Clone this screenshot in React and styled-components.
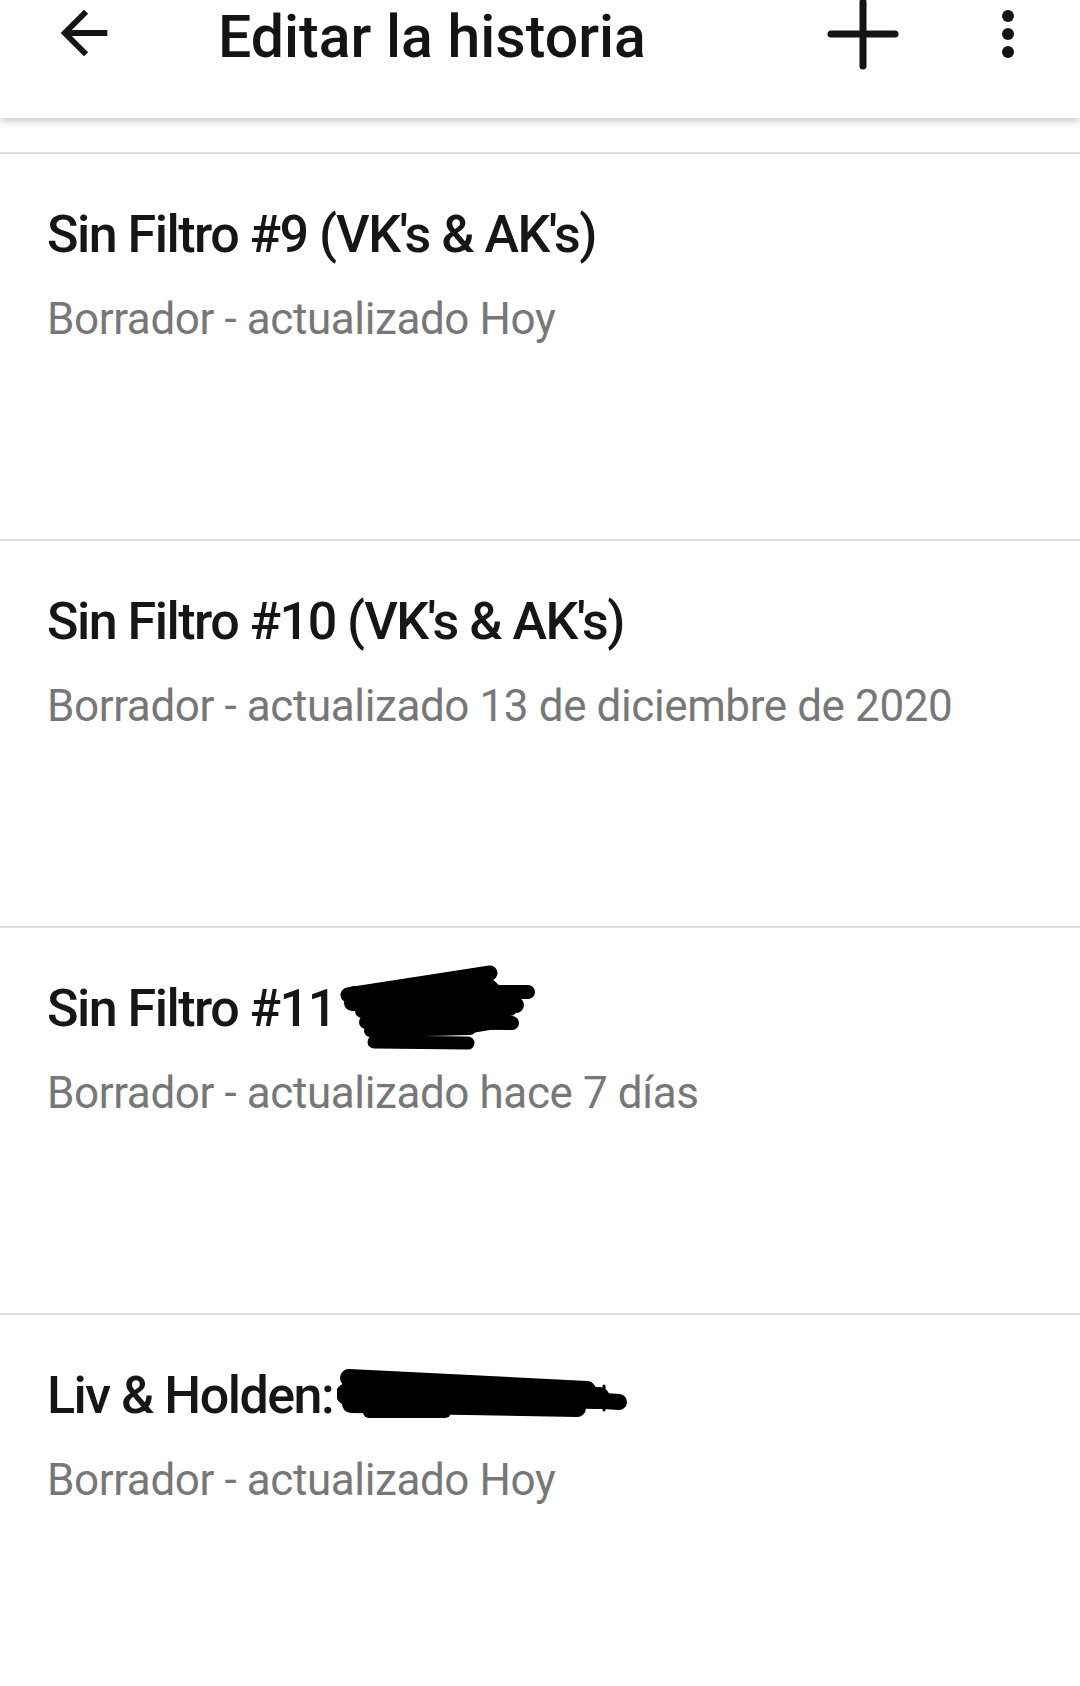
import styled, { createGlobalStyle } from 'styled-components';

const GlobalStyle = createGlobalStyle`
    html, body {
        margin: 0;
        padding: 0;
        background: #ffffff;
    }
    body {
        font-family: Roboto, "Noto Sans", "Liberation Sans", sans-serif;
    }
`;

const Screen = styled.div`
    width: 1080px;
    height: 1686px;
    overflow: hidden;
    background: #ffffff;
`;

const Toolbar = styled.header`
    position: relative;
    z-index: 2;
    display: flex;
    align-items: flex-start;
    height: 118px;
    background: #ffffff;
    box-shadow: 0 3px 8px rgba(0, 0, 0, 0.22);
`;

const IconButton = styled.button`
    display: flex;
    align-items: center;
    justify-content: center;
    padding: 0;
    border: none;
    background: none;
    color: #141414;
    margin-top: ${(p) => p.$top || 0}px;
    margin-left: ${(p) => p.$left || 0}px;
    margin-right: ${(p) => p.$right || 0}px;
`;

const ToolbarTitle = styled.h1`
    margin: 2px 0 0 99px;
    flex: 1;
    font-size: 59px;
    line-height: 70px;
    font-weight: 500;
    color: #141414;
    white-space: nowrap;
`;

const List = styled.div`
    padding-top: 34px;
`;

const Row = styled.div`
    box-sizing: border-box;
    height: 387px;
    border-top: 2px solid #dedede;
    padding: 51px 40px 0 47px;
`;

const StoryTitle = styled.div`
    height: 60px;
    font-size: 52px;
    line-height: 60px;
    font-weight: 500;
    letter-spacing: -1.5px;
    color: #161616;
    white-space: nowrap;
`;

const StoryMeta = styled.div`
    margin-top: 28px;
    font-size: 44px;
    line-height: 52px;
    font-weight: 400;
    letter-spacing: -0.4px;
    color: #777777;
    white-space: nowrap;
`;

// el tachón no debe empujar la línea: márgenes negativos lo dejan dentro de la caja,
// y vertical-align compensa el margen inferior para que el dibujo quede en su sitio
const Scribble = styled.svg`
    display: inline-block;
    vertical-align: ${(p) => p.$drop + p.$under}px;
    margin: ${(p) => -p.$over}px 0 ${(p) => -p.$under}px ${(p) => p.$gap}px;
`;

const BackIcon = () => (
    <svg width="70" height="70" viewBox="0 0 24 24" fill="currentColor">
        <path d="M20 11H7.83l5.59-5.59L12 4l-8 8 8 8 1.41-1.41L7.83 13H20v-2z" />
    </svg>
);

const PlusIcon = () => (
    <svg width="80" height="80" viewBox="0 0 80 80" stroke="currentColor" strokeWidth="7" strokeLinecap="round">
        <line x1="8" y1="40" x2="72" y2="40" />
        <line x1="40" y1="8" x2="40" y2="72" />
    </svg>
);

const MoreIcon = () => (
    <svg width="24" height="60" viewBox="0 0 24 60" fill="currentColor">
        <circle cx="12" cy="12" r="6" />
        <circle cx="12" cy="30" r="6" />
        <circle cx="12" cy="48" r="6" />
    </svg>
);

// tachones a mano sobre los títulos
const ScribbleShort = () => (
    <Scribble $drop={-24} $over={30} $under={30} $gap={4} width="200" height="85" viewBox="0 0 200 85">
        <g stroke="#000" strokeLinecap="round" fill="none">
            <path d="M8 30 L150 8" strokeWidth="15" />
            <path d="M14 28 L188 27" strokeWidth="14" />
            <path d="M12 38 L176 40" strokeWidth="16" />
            <path d="M22 46 L170 44" strokeWidth="14" />
            <path d="M26 57 L172 58" strokeWidth="14" />
            <path d="M30 66 L130 64" strokeWidth="12" />
            <path d="M34 77 L128 78" strokeWidth="13" />
        </g>
        <path d="M14 30 L150 12 L170 30 L168 62 L120 70 L30 72 Z" fill="#000" />
    </Scribble>
);

const ScribbleLong = () => (
    <Scribble $drop={-9} $over={20} $under={20} $gap={4} width="292" height="56" viewBox="0 0 292 56">
        <g stroke="#000" strokeLinecap="round" fill="none">
            <path d="M12 12 L250 24" strokeWidth="18" />
            <path d="M10 28 L262 32" strokeWidth="22" />
            <path d="M14 38 L240 42" strokeWidth="18" />
            <path d="M32 46 L108 46" strokeWidth="12" />
            <path d="M252 34 L282 36" strokeWidth="16" />
            <path d="M267 20 L267 44" strokeWidth="3" />
        </g>
    </Scribble>
);

const stories = [
    { title: "Sin Filtro #9 (VK's & AK's)", meta: 'Borrador - actualizado Hoy' },
    { title: "Sin Filtro #10 (VK's & AK's)", meta: 'Borrador - actualizado 13 de diciembre de 2020' },
    { title: 'Sin Filtro #11', meta: 'Borrador - actualizado hace 7 días', hidden: 'short' },
    { title: 'Liv & Holden:', meta: 'Borrador - actualizado Hoy', hidden: 'long' },
];

const App = () => {
    return (
        <Screen>
            <GlobalStyle />
            <Toolbar>
                <IconButton $left={49} $top={-2} aria-label="Atrás">
                    <BackIcon />
                </IconButton>
                <ToolbarTitle>Editar la historia</ToolbarTitle>
                <IconButton $top={-6} aria-label="Nueva parte">
                    <PlusIcon />
                </IconButton>
                <IconButton $left={93} $top={4} $right={60} aria-label="Más opciones">
                    <MoreIcon />
                </IconButton>
            </Toolbar>
            <List>
                {stories.map((story) => (
                    <Row key={story.title}>
                        <StoryTitle>
                            {story.title}
                            {story.hidden === 'short' && <ScribbleShort />}
                            {story.hidden === 'long' && <ScribbleLong />}
                        </StoryTitle>
                        <StoryMeta>{story.meta}</StoryMeta>
                    </Row>
                ))}
            </List>
        </Screen>
    );
};

export default App;
